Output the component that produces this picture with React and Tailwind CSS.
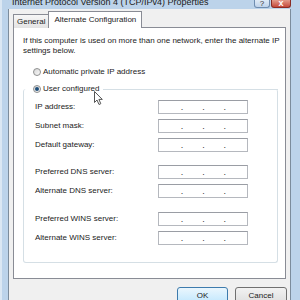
import React from "react";

function IpField() {
  return (
    <div className="flex h-[14px] w-[90px] shrink-0 items-center border border-[#b5b8be] border-t-[#9a9da4] bg-white pl-[3px] pr-[2px] text-[9px] leading-none text-[#333]">
      <span className="flex-1" />
      <span>.</span>
      <span className="flex-1" />
      <span>.</span>
      <span className="flex-1" />
      <span>.</span>
      <span className="flex-1" />
    </div>
  );
}

function Row({ label, className = "" }) {
  return (
    <div className={"flex items-center justify-between " + className}>
      <span>{label}</span>
      <IpField />
    </div>
  );
}

function Radio({ checked }) {
  return (
    <span className="flex h-[8px] w-[8px] shrink-0 items-center justify-center rounded-full border border-[#8e8f8f] bg-gradient-to-br from-[#d6d6d6] to-[#fafafa]">
      {checked && <span className="h-[4px] w-[4px] rounded-full bg-[#1f4f7a]" />}
    </span>
  );
}

function Cursor() {
  return (
    <svg className="absolute left-[92px] top-[91px]" width="10" height="15" viewBox="0 0 10 15">
      <path d="M0.5 0.5 L0.5 11.5 L3 9 L5 13.5 L6.8 12.7 L4.9 8.4 L8.3 8.4 Z" fill="#fff" stroke="#555" strokeWidth="1" strokeLinejoin="round" />
    </svg>
  );
}

export default function App() {
  return (
    <div className="relative flex h-[300px] w-[300px] flex-col overflow-hidden border-l-2 border-[#dbe7f3] bg-[#bcd3ea] font-['Liberation_Sans',Arial,sans-serif] text-[8px] text-[#1b1b1b]">
      {/* Title bar */}
      <div className="relative flex h-[9px] shrink-0 items-end">
        <div className="ml-[10px] -mt-[6px] whitespace-nowrap text-[9px] leading-[14px] text-[#202020]">
          Internet Protocol Version 4 (TCP/IPv4) Properties
        </div>
        <div className="ml-auto mr-[9px] flex self-start">
          <div className="flex h-[8px] w-[16px] items-end justify-center rounded-b-[3px] border border-t-0 border-[#6f8db0] bg-gradient-to-b from-[#dfeaf6] to-[#c0d3ea] text-[8px] leading-none text-[#333]">
            <span className="-mb-[1px]">?</span>
          </div>
          <div className="ml-[1px] flex h-[8px] w-[20px] items-end justify-center rounded-b-[3px] border border-t-0 border-[#8a2b24] bg-gradient-to-b from-[#e29a8b] to-[#c4473b] text-[9px] font-bold leading-none text-white">
            <span className="-mb-[1px]">x</span>
          </div>
        </div>
      </div>

      {/* Window body */}
      <div className="flex flex-1">
        <div className="ml-[6px] flex w-[283px] shrink-0 flex-col border-x border-[#7c8c9c] bg-[#f0f0f0] pt-[2px]">
          {/* Tabs */}
          <div className="relative z-10 ml-[4px] flex h-[17px] items-end">
            <div className="flex h-[14px] items-center border border-b-0 border-[#898c95] bg-gradient-to-b from-[#f7f7f7] to-[#e3e3e3] px-[3px] leading-none">
              General
            </div>
            <div className="-ml-[1px] flex h-[17px] items-center border border-b-0 border-[#898c95] bg-white px-[5px] pb-[1px] leading-none">
              Alternate Configuration
            </div>
          </div>

          {/* Tab page */}
          <div className="-mt-[1px] ml-[4px] flex h-[252px] w-[273px] flex-col overflow-hidden border border-[#898c95] bg-white pt-[8px]">
            <p className="whitespace-nowrap pl-[9px] leading-[10px]">
              If this computer is used on more than one network, enter the alternate IP
              <br />
              settings below.
            </p>

            <div className="ml-[19px] mt-[10px] flex h-[12px] items-center gap-[2px]">
              <Radio />
              <span>Automatic private IP address</span>
            </div>

            <div className="ml-[19px] mt-[5px] flex h-[12px] items-center gap-[2px]">
              <Radio checked />
              <span className="pr-[2px]">User configured</span>
              <span className="mr-[7px] h-[1px] flex-1 self-center bg-[#d5dfe5]" />
            </div>

            <div className="-mt-[6px] ml-[9px] mr-[7px] h-[174px] rounded-[3px] border border-t-0 border-[#d5dfe5] pt-[11px]">
              <div className="flex flex-col gap-[5px] pl-[11px] pr-[29px]">
                <Row label="IP address:" />
                <Row label="Subnet mask:" />
                <Row label="Default gateway:" />
                <Row label="Preferred DNS server:" className="mt-[8px]" />
                <Row label="Alternate DNS server:" />
                <Row label="Preferred WINS server:" className="mt-[9px]" />
                <Row label="Alternate WINS server:" />
              </div>
            </div>
          </div>

          {/* Buttons */}
          <div className="mr-[3px] mt-[8px] flex justify-end gap-[7px]">
            <button className="h-[18px] w-[51px] rounded-[3px] border border-[#3d7bad] bg-gradient-to-b from-[#eaf6fd] to-[#bee6fd] leading-none">
              OK
            </button>
            <button className="h-[18px] w-[52px] rounded-[3px] border border-[#707070] bg-gradient-to-b from-[#f2f2f2] to-[#dddddd] leading-none">
              Cancel
            </button>
          </div>
        </div>
      </div>

      <Cursor />
    </div>
  );
}
